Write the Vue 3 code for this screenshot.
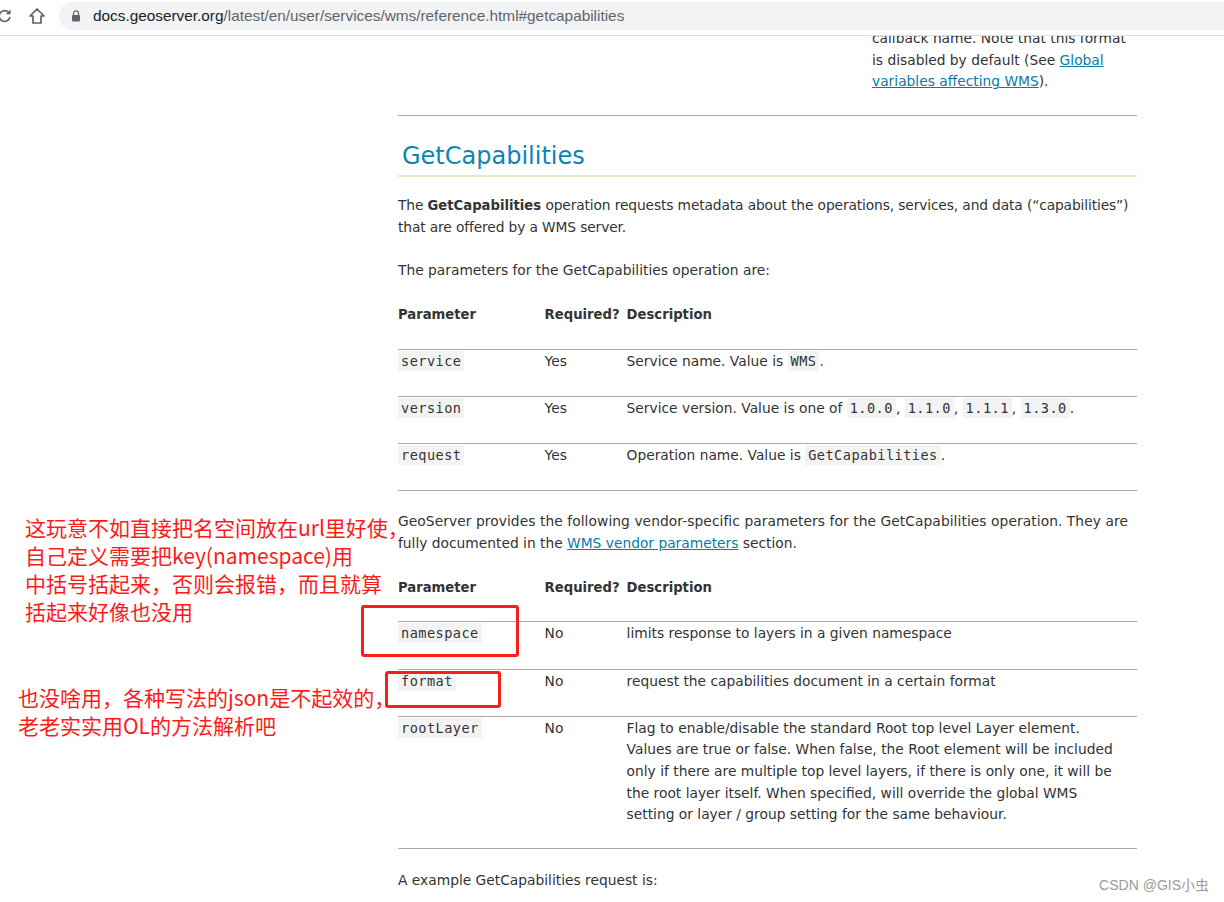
<template>
  <div class="screen">
    <header class="toolbar">
      <svg class="reload" width="16" height="16" viewBox="0 0 16 16">
        <path d="M11.5 4.2A5.4 5.4 0 1 0 13 9" fill="none" stroke="#5f6368" stroke-width="1.6" />
        <path d="M8.6 6.2h5V1.4z" fill="#5f6368" />
      </svg>
      <svg class="home" width="18" height="18" viewBox="0 0 18 18">
        <path d="M9 2 2 9h3v7h8V9h3z" fill="none" stroke="#5f6368" stroke-width="1.7" stroke-linejoin="round" />
      </svg>
      <div class="omnibox">
        <svg width="10" height="12" viewBox="0 0 10 12">
          <path d="M2.5 5V3.4a2.5 2.5 0 0 1 5 0V5" fill="none" stroke="#5f6368" stroke-width="1.2" />
          <rect x="1" y="5" width="8" height="6.5" rx="1" fill="#5f6368" />
        </svg>
        <span class="url"><b>docs.geoserver.org</b>/latest/en/user/services/wms/reference.html#getcapabilities</span>
      </div>
    </header>

    <main class="page">
      <div class="doc">
        <div class="prev">
          <p class="prev-text">
            callback name. Note that this format is disabled by default (See
            <a>Global variables affecting WMS</a>).
          </p>
        </div>
        <hr class="rule" />

        <h2 class="title">GetCapabilities</h2>
        <p class="intro">
          The <strong>GetCapabilities</strong> operation requests metadata about the operations, services, and data (“capabilities”) that are offered by a WMS server.
        </p>
        <p class="lead">The parameters for the GetCapabilities operation are:</p>

        <div class="thead">
          <span>Parameter</span><span>Required?</span><span>Description</span>
        </div>
        <div v-for="row in standardRows" :key="row.name" class="row">
          <span><code>{{ row.name }}</code></span>
          <span>{{ row.required }}</span>
          <span class="desc">
            <template v-for="(part, i) in row.desc" :key="i">
              <code v-if="part.code">{{ part.code }}</code>
              <template v-else>{{ part }}</template>
            </template>
          </span>
        </div>
        <hr class="rule" />

        <p class="vendor">
          GeoServer provides the following vendor-specific parameters for the GetCapabilities operation. They are fully documented in the <a>WMS vendor parameters</a> section.
        </p>

        <div class="thead second">
          <span>Parameter</span><span>Required?</span><span>Description</span>
        </div>
        <div v-for="row in vendorRows" :key="row.name" class="row">
          <span><code>{{ row.name }}</code></span>
          <span>{{ row.required }}</span>
          <span class="desc">{{ row.desc }}</span>
        </div>
        <hr class="rule" />

        <p class="example">A example GetCapabilities request is:</p>
      </div>
    </main>

    <div class="note note-a">这玩意不如直接把名空间放在url里好使，<br />自己定义需要把key(namespace)用<br />中括号括起来，否则会报错，而且就算<br />括起来好像也没用</div>
    <div class="note note-b">也没啥用，各种写法的json是不起效的，<br />老老实实用OL的方法解析吧</div>
    <div class="mark mark-a"></div>
    <div class="mark mark-b"></div>
    <div class="watermark">CSDN @GIS小虫</div>
  </div>
</template>

<script setup>
const standardRows = [
  { name: 'service', required: 'Yes', desc: ['Service name. Value is ', { code: 'WMS' }, '.'] },
  {
    name: 'version',
    required: 'Yes',
    desc: ['Service version. Value is one of ', { code: '1.0.0' }, ', ', { code: '1.1.0' }, ', ', { code: '1.1.1' }, ', ', { code: '1.3.0' }, '.'],
  },
  { name: 'request', required: 'Yes', desc: ['Operation name. Value is ', { code: 'GetCapabilities' }, '.'] },
]

const vendorRows = [
  { name: 'namespace', required: 'No', desc: 'limits response to layers in a given namespace' },
  { name: 'format', required: 'No', desc: 'request the capabilities document in a certain format' },
  {
    name: 'rootLayer',
    required: 'No',
    desc: 'Flag to enable/disable the standard Root top level Layer element. Values are true or false. When false, the Root element will be included only if there are multiple top level layers, if there is only one, it will be the root layer itself. When specified, will override the global WMS setting or layer / group setting for the same behaviour.',
  },
]
</script>

<style>
html, body { margin: 0; background: #fff; }
</style>

<style scoped>
.screen {
  position: relative;
  width: 1224px;
  height: 902px;
  overflow: hidden;
  display: flex;
  flex-direction: column;
  background: #fff;
  font-family: "DejaVu Sans", sans-serif;
  font-size: 13.8px;
  line-height: 21.7px;
  color: #333;
}

.toolbar {
  flex: none;
  height: 36px;
  box-sizing: border-box;
  border-bottom: 1px solid #dadce0;
  display: flex;
  align-items: center;
}
.reload { margin: -3px 0 0 -3px; flex: none; }
.home { margin: -3px 0 0 15px; flex: none; }
.omnibox {
  flex: 1;
  height: 28px;
  margin: -4px 0 0 13px;
  padding-left: 12px;
  background: #f1f3f4;
  border-radius: 14px 0 0 14px;
  display: flex;
  align-items: center;
  gap: 12px;
}
.url {
  font-family: "Liberation Sans", sans-serif;
  font-size: 15.35px;
  color: #5f6368;
  white-space: nowrap;
}
.url b { font-weight: 400; color: #202124; }

.page { flex: 1; min-height: 0; overflow: hidden; padding-left: 398px; }
.doc { width: 739px; }

.prev { height: 57px; overflow: hidden; padding-left: 474px; }
.prev-text { margin: -8px 0 0; width: 262px; }
a { color: #0b7aa5; text-decoration: underline; }

.rule { margin: 0; border: 0; border-top: 1px solid #aaa; }
.prev + .rule { margin-top: 22px; }

.title {
  margin: 22px 0 0;
  padding: 0 0 2px 4px;
  height: 35px;
  font-size: 24px;
  line-height: 36px;
  font-weight: 400;
  color: #0b85b5;
  border-bottom: 2px solid #e3ecc8;
}
.intro { margin: 18px 0 0; letter-spacing: -.13px; }
.lead { margin: 22px 0 0; }
strong { font-size: 13.2px; letter-spacing: 0; }

.thead, .row {
  display: grid;
  grid-template-columns: 146.6px 82px 1fr;
}
.thead { margin-top: 22px; height: 45px; font-weight: 700; font-size: 13.2px; }
.thead.second { margin-top: 22px; height: 44px; }
.row { border-top: 1px solid #aaa; padding: 1px 0 23.3px; }
.thead.second + .row { padding-bottom: 24.3px; }
.row:last-of-type { padding-bottom: 21.7px; }
.desc { padding-right: 15px; }

code {
  font-family: "DejaVu Sans Mono", monospace;
  font-size: 13.6px;
  letter-spacing: .45px;
  background: #f3f3f3;
  padding: 2px 3px;
}
.vendor { margin: 20px 0 0; }
.vendor::first-line { letter-spacing: .07px; }
.example { margin: 21px 0 0; }

.note {
  position: absolute;
  font-family: "Noto Sans CJK SC", sans-serif;
  font-size: 21px;
  line-height: 28px;
  color: #ff1a1a;
  white-space: nowrap;
}
.note-a { left: 25px; top: 513px; }
.note-b { left: 18px; top: 683px; }
.mark {
  position: absolute;
  box-sizing: border-box;
  border: 3px solid #f5201a;
  border-radius: 3px;
}
.mark-a { left: 361px; top: 605px; width: 158px; height: 52px; }
.mark-b { left: 385px; top: 671px; width: 116px; height: 37px; }
.watermark {
  position: absolute;
  right: 15px;
  top: 876px;
  font-family: "Liberation Sans", "Noto Sans CJK SC", sans-serif;
  font-size: 14px;
  line-height: 18px;
  color: #9a9a9a;
}
</style>
